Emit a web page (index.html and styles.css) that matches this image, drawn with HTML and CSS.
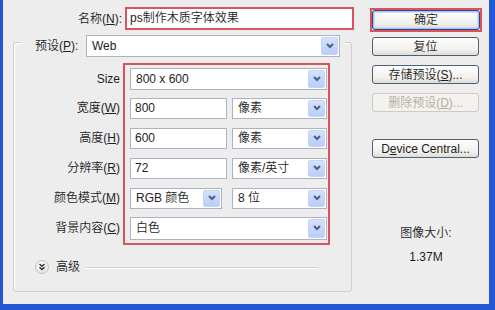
FILE: index.html
```html
<!DOCTYPE html>
<html>
<head>
<meta charset="utf-8">
<link rel="stylesheet" href="styles.css">
</head>
<body>
<div class="window">
  <div class="left">
    <div class="name-row">
      <label class="name-label">名称(<u>N</u>):</label>
      <div class="name-input">ps制作木质字体效果</div>
    </div>
    <div class="group">
      <div class="legend">
        <span class="legend-label">预设(<u>P</u>):</span>
        <div class="select sel-preset"><span class="val">Web</span><span class="arrow"><svg width="8" height="6" viewBox="0 0 8 6"><polyline points="1,1 4,4 7,1" fill="none" stroke="#4a5f86" stroke-width="2"/></svg></span></div>
      </div>
      <div class="params">
        <div class="labels">
          <div class="lab r1">Size</div>
          <div class="lab">宽度(<u>W</u>)</div>
          <div class="lab">高度(<u>H</u>)</div>
          <div class="lab">分辨率(<u>R</u>)</div>
          <div class="lab">颜色模式(<u>M</u>)</div>
          <div class="lab">背景内容(<u>C</u>)</div>
        </div>
        <div class="redbox">
          <div class="crow r1">
            <div class="select sel-full"><span class="val">800 x 600</span><span class="arrow"><svg width="8" height="6" viewBox="0 0 8 6"><polyline points="1,1 4,4 7,1" fill="none" stroke="#4a5f86" stroke-width="2"/></svg></span></div>
          </div>
          <div class="crow">
            <div class="input">800</div>
            <div class="select sel-unit"><span class="val">像素</span><span class="arrow"><svg width="8" height="6" viewBox="0 0 8 6"><polyline points="1,1 4,4 7,1" fill="none" stroke="#4a5f86" stroke-width="2"/></svg></span></div>
          </div>
          <div class="crow">
            <div class="input">600</div>
            <div class="select sel-unit"><span class="val">像素</span><span class="arrow"><svg width="8" height="6" viewBox="0 0 8 6"><polyline points="1,1 4,4 7,1" fill="none" stroke="#4a5f86" stroke-width="2"/></svg></span></div>
          </div>
          <div class="crow">
            <div class="input">72</div>
            <div class="select sel-unit"><span class="val">像素/英寸</span><span class="arrow"><svg width="8" height="6" viewBox="0 0 8 6"><polyline points="1,1 4,4 7,1" fill="none" stroke="#4a5f86" stroke-width="2"/></svg></span></div>
          </div>
          <div class="crow">
            <div class="select sel-mode"><span class="val">RGB 颜色</span><span class="arrow"><svg width="8" height="6" viewBox="0 0 8 6"><polyline points="1,1 4,4 7,1" fill="none" stroke="#4a5f86" stroke-width="2"/></svg></span></div>
            <div class="select sel-unit"><span class="val">8 位</span><span class="arrow"><svg width="8" height="6" viewBox="0 0 8 6"><polyline points="1,1 4,4 7,1" fill="none" stroke="#4a5f86" stroke-width="2"/></svg></span></div>
          </div>
          <div class="crow r6">
            <div class="select sel-full tall"><span class="val">白色</span><span class="arrow"><svg width="8" height="6" viewBox="0 0 8 6"><polyline points="1,1 4,4 7,1" fill="none" stroke="#4a5f86" stroke-width="2"/></svg></span></div>
          </div>
        </div>
      </div>
      <div class="adv-row">
        <span class="adv-btn"><svg width="8" height="8" viewBox="0 0 8 8"><polyline points="1.5,1 4,3.2 6.5,1" fill="none" stroke="#333" stroke-width="1.5"/><polyline points="1.5,4.2 4,6.4 6.5,4.2" fill="none" stroke="#333" stroke-width="1.5"/></svg></span>
        <span class="adv-text">高级</span>
        <span class="adv-line"></span>
      </div>
    </div>
  </div>
  <div class="right">
    <div class="ok-wrap"><div class="btn ok">确定</div></div>
    <div class="btn b-reset">复位</div>
    <div class="btn b-save">存储预设(<u>S</u>)...</div>
    <div class="btn b-del disabled">删除预设(<u>D</u>)...</div>
    <div class="btn b-dev">D<u>e</u>vice Central...</div>
    <div class="size-title">图像大小:</div>
    <div class="size-val">1.37M</div>
  </div>
</div>
</body>
</html>
```

FILE: styles.css
```css
html, body {
  margin: 0;
  padding: 0;
}
body {
  width: 495px;
  height: 310px;
  overflow: hidden;
  font-family: "Liberation Sans", "Noto Sans CJK SC", sans-serif;
  font-size: 12px;
  font-weight: 350;
  color: #1e1e1e;
}
u { text-decoration: underline; text-underline-offset: 1px; }

.window {
  width: 495px;
  height: 310px;
  box-sizing: border-box;
  background: #ededed;
  border-left: 3px solid #2456d6;
  border-right: 6px solid #2456d6;
  border-bottom: 6px solid #2456d6;
  display: flex;
}

.left {
  width: 357px;
  flex: none;
}

.name-row {
  display: flex;
  align-items: center;
  margin-top: 7px;
  height: 23px;
}
.name-label {
  width: 122px;
  text-align: right;
  padding-right: 3px;
  box-sizing: border-box;
  line-height: 14px;
}
.name-input {
  width: 229px;
  height: 23px;
  box-sizing: border-box;
  border: 2px solid #d9545e;
  background: #fff;
  padding-left: 3px;
  line-height: 19px;
}

.group {
  margin-left: 10px;
  margin-top: 12px;
  width: 339px;
  height: 250px;
  box-sizing: border-box;
  border: 1px solid #cfcfcf;
  border-radius: 3px;
  box-shadow: inset 1px 1px 0 #fff;
}

.legend {
  display: flex;
  align-items: center;
  margin-top: -8px;
  margin-left: 8px;
  width: 323px;
  box-sizing: border-box;
  padding-left: 13px;
  padding-right: 4px;
  background: #ededed;
}
.legend-label {
  width: 51px;
  line-height: 14px;
}

.select {
  display: flex;
  align-items: center;
  box-sizing: border-box;
  height: 21px;
  border: 1px solid #aab3bf;
  background: #fff;
  padding-left: 5px;
}
.select .val { line-height: 14px; white-space: nowrap; }
.select .arrow {
  align-self: stretch;
  width: 15px;
  margin: 1px 1px 1px auto;
  border-radius: 2px;
  background: linear-gradient(#d5e1fd, #b9cdf8);
  border: 1px solid #c4d3f6;
  display: flex;
  align-items: center;
  justify-content: center;
}
.sel-preset { width: 254px; height: 22px; }
.sel-full { width: 197px; height: 22px; }
.sel-full.tall { height: 23px; }
.sel-unit { width: 95px; }
.sel-mode { width: 92px; margin-right: 10px; }

.params {
  display: flex;
  margin-top: 6px;
}
.labels {
  width: 106px;
  flex: none;
  margin-right: 3px;
  padding-top: 2px;
}
.lab {
  height: 30px;
  display: flex;
  align-items: center;
  justify-content: flex-end;
  line-height: 14px;
}
.lab.r1, .crow.r1 { height: 28px; }

.redbox {
  width: 207px;
  box-sizing: border-box;
  border: 2px solid #d9545e;
  padding: 0 1px 0 5px;
}
.crow {
  height: 30px;
  display: flex;
  align-items: center;
}
.input {
  width: 97px;
  height: 21px;
  box-sizing: border-box;
  border: 1px solid #aab3bf;
  background: #fff;
  padding-left: 4px;
  line-height: 19px;
  margin-right: 5px;
}

.adv-row {
  display: flex;
  align-items: center;
  margin-top: 15px;
  margin-left: 21px;
  margin-right: 33px;
}
.adv-btn {
  width: 14px;
  height: 14px;
  box-sizing: border-box;
  border-radius: 50%;
  border: 1px solid #c3c3c3;
  background: radial-gradient(circle at 40% 35%, #ffffff, #dcdcdc);
  display: flex;
  align-items: center;
  justify-content: center;
}
.adv-text {
  margin-left: 7px;
  line-height: 14px;
}
.adv-line {
  flex: 1;
  height: 1px;
  background: #cfcfcf;
  margin-left: 6px;
  box-shadow: 0 1px 0 #fff;
}

.right {
  width: 112px;
  margin-left: 10px;
  display: flex;
  flex-direction: column;
  align-items: flex-start;
}
.ok-wrap {
  margin-top: 8px;
  width: 112px;
  height: 24px;
  box-sizing: border-box;
  border: 2px solid #d9545e;
}
.btn {
  width: 107px;
  height: 19px;
  box-sizing: border-box;
  border: 1px solid #4b6275;
  border-radius: 3px;
  background: linear-gradient(#fefefe, #f1f0ec 70%, #dedcd6);
  display: flex;
  align-items: center;
  justify-content: center;
  line-height: 14px;
  margin-left: 2px;
  white-space: nowrap;
}
.btn.ok {
  width: 108px;
  height: 20px;
  margin-left: 0;
  border-color: #2d4a80;
  box-shadow: inset 0 0 0 1px #a9c1f3, inset 0 0 0 2px #cfdcf8;
}
.b-reset { margin-top: 5px; }
.b-save { margin-top: 9px; }
.b-del { margin-top: 9px; }
.b-dev { margin-top: 27px; }
.btn.disabled {
  border-color: #cdcbc2;
  color: #b0ad9f;
  background: #f3f2ee;
}
.size-title {
  margin-top: 68px;
  width: 112px;
  text-align: center;
  line-height: 14px;
}
.size-val {
  margin-top: 10px;
  width: 112px;
  text-align: center;
  line-height: 14px;
}
```
